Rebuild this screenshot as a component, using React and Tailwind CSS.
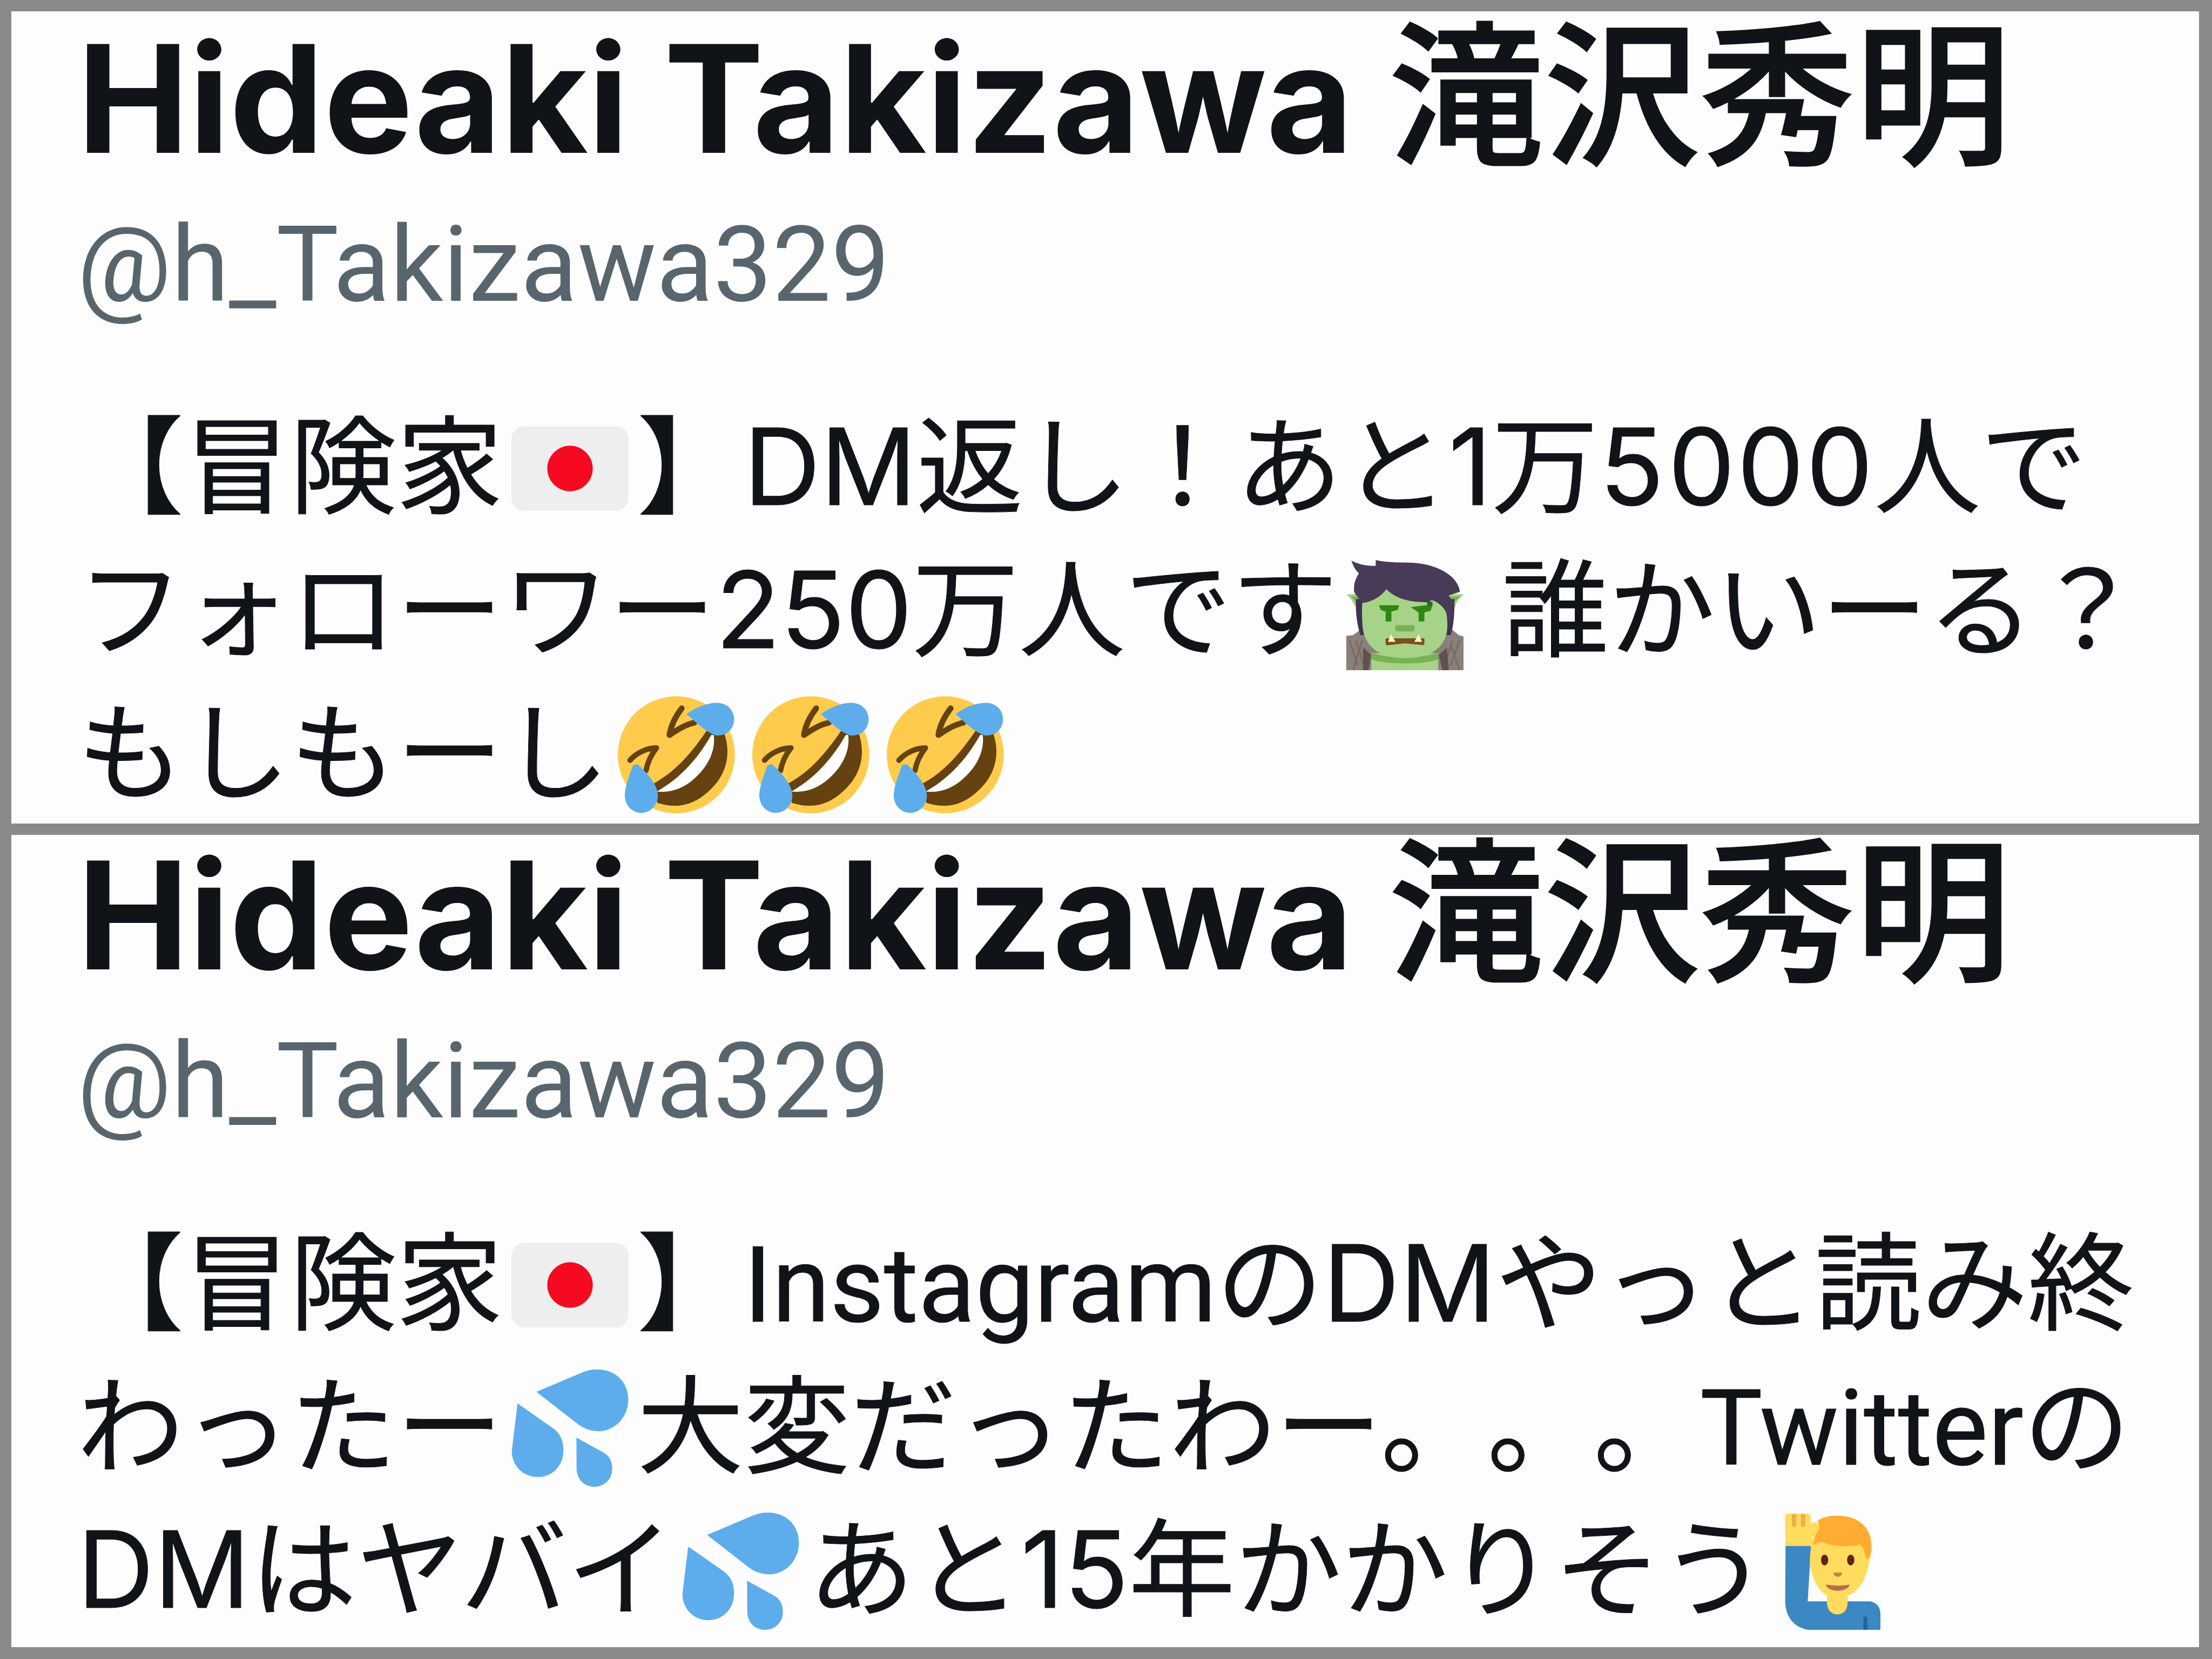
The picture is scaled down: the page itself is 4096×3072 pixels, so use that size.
const Flag = () => (
  <svg viewBox="0 0 36 36" className="mx-4 inline-block size-[217px] align-[-41px]" role="img" aria-label="Japan">
    <rect y="5" width="36" height="26" rx="4" fill="#EEEEEE" />
    <circle cx="18" cy="18" r="7" fill="#F50A22" />
  </svg>
);

const Troll = () => (
  <svg viewBox="112 75 650 650" className="mx-4 inline-block size-[217px] align-[-41px]" role="img" aria-label="Troll">
    <path d="M112 535L150 530L190 500L700 500L735 530L762 538V725H112Z" fill="#8A7F79" />
    <path d="M130 560L175 700M165 560L205 690M200 560L150 725M740 560L690 700M700 560L660 690M690 580L740 725" stroke="#766B66" strokeWidth="9" fill="none" />
    <path d="M205 600L250 640L235 725H205ZM670 600L625 640L645 725H680Z" fill="#62504F" />
    <path d="M112 305L200 300L200 350L160 372C150 345 135 325 112 305ZM765 305L680 300L690 350L715 378C722 345 740 325 765 305Z" fill="#A6D388" />
    <path d="M135 315L190 318L165 345ZM745 315L690 318L712 345Z" fill="#77B255" />
    <path d="M250 630H622V725H250Z" fill="#A6D388" />
    <path d="M250 625C330 665 540 665 622 625V665C540 695 330 695 250 665Z" fill="#77B255" />
    <path d="M165 330H712C712 430 705 490 690 530L190 530C170 470 163 400 165 330Z" fill="#3F3352" />
    <path d="M205 310L335 270L480 310L640 330C665 370 675 430 672 490C668 590 590 658 437 658C290 658 215 590 203 490C197 420 198 360 205 310Z" fill="#A6D388" />
    <path d="M140 118C180 138 225 148 275 146V114C320 124 370 128 440 128C590 125 730 190 742 290C715 300 690 305 680 312L712 350L690 470C670 400 650 360 585 335L570 348C480 350 390 335 334 275C300 325 240 350 200 352C185 330 165 310 155 290C152 240 165 215 182 188C160 168 150 145 140 118Z" fill="#473B57" />
    <path d="M293 365H405L397 390L362 400V455H330V400L303 390ZM470 375L555 365L590 365L580 395L545 405V455H513V405Z" fill="#2F8711" />
    <path d="M560 345H590V368H560Z" fill="#2B6A28" />
    <rect x="383" y="475" width="107" height="35" rx="12" fill="#77B255" />
    <path d="M330 548H545V580Q540 590 525 584L437 576L350 586Q330 590 330 575Z" fill="#7D4E1E" />
    <path d="M343 568L360 526L385 568ZM489 568L513 526L532 568Z" fill="#FFF3C8" />
  </svg>
);

const Rofl = () => (
  <svg viewBox="75 92 651 651" className="mx-4 inline-block size-[217px] align-[-41px]" role="img" aria-label="Rolling on the floor laughing">
    <circle cx="400" cy="418" r="325" fill="#FFCB4C" />
    <path d="M575 275L665 295C700 390 690 500 610 590C520 690 420 725 295 685L270 580C400 510 490 400 575 275Z" fill="#65420F" />
    <path d="M608 308C620 400 570 490 500 550C440 605 370 630 292 622C420 550 520 440 594 308Z" fill="#FFFFFF" />
    <path d="M430 160C395 205 370 255 362 308C405 280 450 250 500 240" fill="none" stroke="#65420F" strokeWidth="32" strokeLinecap="round" strokeLinejoin="round" />
    <path d="M143 448C180 405 240 380 290 380C262 415 240 460 232 505" fill="none" stroke="#65420F" strokeWidth="30" strokeLinecap="round" strokeLinejoin="round" />
    <path d="M456 192C520 145 590 125 640 130C695 138 723 180 721 225C717 285 670 316 618 310C560 290 520 245 456 192Z" fill="#5DADEC" />
    <path d="M185 470C245 525 298 590 298 645C296 700 255 741 205 741C155 740 115 700 114 645C114 590 145 520 160 475Z" fill="#5DADEC" />
  </svg>
);

const Sweat = () => (
  <svg viewBox="141 112 651 651" className="mx-4 inline-block size-[217px] align-[-41px]" role="img" aria-label="Sweat droplets">
    <g fill="#5DADEC">
      <path d="M280 236L530 130C570 112 610 108 650 114C735 127 792 195 790 282C788 380 715 455 620 455C575 452 540 438 510 415Z" />
      <path d="M175 300L375 440C412 468 430 510 430 560C430 645 370 709 288 709C200 709 143 640 143 565Z" />
      <path d="M502 490L650 572C685 590 701 622 701 662C701 720 660 763 603 763C545 763 503 720 503 660Z" />
    </g>
  </svg>
);

const RaisedHand = () => (
  <svg viewBox="65 127 651 651" className="mx-4 inline-block size-[217px] align-[-41px]" role="img" aria-label="Man raising hand">
    <path d="M117 150Q117 132 135 132H245Q258 132 260 150V185L290 180Q305 190 295 205L268 265V315H120Z" fill="#FFDC5D" />
    <path d="M155 135H180V200Q167 215 155 200ZM205 135H230V200Q217 215 205 200Z" fill="#EFB049" />
    <path d="M120 312H262L243 620H590Q645 630 647 690V778H245C165 765 120 705 118 620Z" fill="#3B88C3" />
    <path d="M350 570H465V625C465 665 445 692 408 692C372 692 350 665 350 625Z" fill="#FFDC5D" />
    <path d="M420 145C500 145 580 190 592 270C603 320 600 360 585 395C575 470 550 530 500 570C460 605 365 605 325 570C280 525 255 450 255 390C260 310 270 240 300 190C325 160 365 145 420 145Z" fill="#FFDC5D" />
    <path d="M300 170C340 145 380 142 425 145C520 148 585 205 595 285C600 330 592 365 575 390C560 370 560 330 535 305C460 320 370 315 325 290C305 290 290 300 273 310C275 280 290 240 310 215Z" fill="#FFAC33" />
    <ellipse cx="337" cy="390" rx="20" ry="30" fill="#662113" />
    <ellipse cx="482" cy="390" rx="20" ry="30" fill="#662113" />
    <path d="M385 460H435Q430 483 409 483Q390 483 385 460Z" fill="#C1863A" />
    <path d="M342 527Q409 538 477 527C465 570 360 575 342 527Z" fill="#C1694F" />
    <path d="M552 710Q562 695 575 710V778H552Z" fill="#226699" />
  </svg>
);

const Line = ({ children }) => <span className="block whitespace-nowrap">{children}</span>;

const Word = ({ children }) => (
  <span className="font-['Roboto',sans-serif] text-[194px] leading-none">{children}</span>
);

const Profile = ({ className, children }) => (
  <section className={`bg-[#fdfdfd] pl-[122px] ${className}`}>
    <h2 className="whitespace-nowrap text-[277px] leading-[290px] font-bold text-[#101317]">
      Hideaki Takizawa{' '}
      <span className="text-[288px] leading-none font-medium [-webkit-text-stroke:3px_#101317]">滝沢秀明</span>
    </h2>
    <p className="mt-[30px] font-['Roboto',sans-serif] text-[194px] leading-[265px] text-[#59656d]">@h_Takizawa329</p>
    <p className="mt-[108px] text-[197px] leading-[265px] text-[#101317] [-webkit-text-stroke:1px_#101317]">{children}</p>
  </section>
);

const App = () => {
  return (
    <main
      lang="ja"
      className="grid h-screen grid-cols-1 grid-rows-2 gap-[21px] bg-[#8a8a8a] pt-[21px] pr-6 pb-[22px] pl-[21px] font-['Inter','Noto_Sans_CJK_JP',sans-serif] [text-spacing-trim:space-all]"
    >
      <Profile className="pt-[13px]">
        <Line>【冒険家<Flag />】DM返し！あと1万<span className="tabular-nums">5000</span>人で</Line>
        <Line>フォローワー250万人です<Troll /> 誰かいーる？</Line>
        <Line>もしもーし<Rofl /><Rofl /><Rofl /></Line>
      </Profile>
      <Profile className="pt-0">
        <Line>【冒険家<Flag />】<Word>Instagram</Word>のDMやっと読み終</Line>
        <Line>わったー<Sweat />大変だったわー。。。<Word>Twitter</Word>の</Line>
        <Line>DMはヤバイ<Sweat />あと15年かかりそう<RaisedHand /></Line>
      </Profile>
    </main>
  );
};

export default App;
